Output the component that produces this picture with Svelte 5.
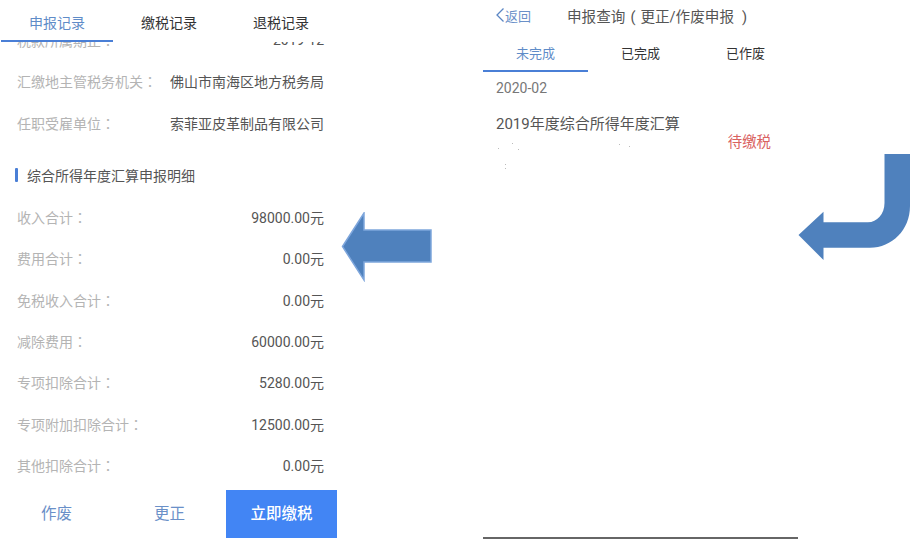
<script>
    const rows = [
        { label: "汇缴地主管税务机关", value: "佛山市南海区地方税务局" },
        { label: "任职受雇单位", value: "索菲亚皮革制品有限公司" },
    ];
    const details = [
        { label: "收入合计", value: "98000.00元" },
        { label: "费用合计", value: "0.00元" },
        { label: "免税收入合计", value: "0.00元" },
        { label: "减除费用", value: "60000.00元" },
        { label: "专项扣除合计", value: "5280.00元" },
        { label: "专项附加扣除合计", value: "12500.00元" },
        { label: "其他扣除合计", value: "0.00元" },
    ];
    const leftTabs = ["申报记录", "缴税记录", "退税记录"];
    const rightTabs = ["未完成", "已完成", "已作废"];
    // stray pixels left over from the redacted line in the source shot
    const specks = [[2, 21], [16, 16], [22, 22], [123, 17], [133, 19], [9, 37], [9, 41]];
</script>

<div class="page">
    <section class="detail">
        <nav class="tabs detail-tabs">
            {#each leftTabs as tab, i}
                <div class="tab" class:active={i === 0}>{tab}</div>
            {/each}
        </nav>

        <div class="scroll">
            <div class="row clipped">
                <span class="label">税款所属期止<span class="colon">：</span></span>
                <span class="value">2019-12</span>
            </div>
            {#each rows as row}
                <div class="row">
                    <span class="label">{row.label}<span class="colon">：</span></span>
                    <span class="value">{row.value}</span>
                </div>
            {/each}

            <h2 class="heading">综合所得年度汇算申报明细</h2>

            {#each details as row}
                <div class="row">
                    <span class="label">{row.label}<span class="colon">：</span></span>
                    <span class="value">{row.value}</span>
                </div>
            {/each}
        </div>

        <footer class="actions">
            <button class="link">作废</button>
            <button class="link">更正</button>
            <button class="primary">立即缴税</button>
        </footer>
    </section>

    <div class="gutter">
        <svg class="arrow-left" width="94" height="70" viewBox="0 0 94 70">
            <path
                d="M1.5 34.5 L23 1 V18 H90 V50 H23 V68 Z"
                fill="#4f81bd"
                stroke="#7ea6dc"
                stroke-width="1.5"
            />
        </svg>
    </div>

    <section class="list">
        <header class="topbar">
            <span class="back">
                <svg width="10" height="16" viewBox="0 0 10 16">
                    <path d="M8.5 1.5 L2 8 L8.5 14.5" fill="none" stroke="#5b86c4" stroke-width="1.3" />
                </svg>
                返回
            </span>
            <span class="title">申报查询<span class="open">(</span>更正/作废申报<span class="close">)</span></span>
        </header>

        <nav class="tabs list-tabs">
            {#each rightTabs as tab, i}
                <div class="tab" class:active={i === 0}>{tab}</div>
            {/each}
        </nav>

        <div class="date">2020-02</div>

        <div class="item">
            <div class="item-title">2019年度综合所得年度汇算</div>
            <div class="status">待缴税</div>
            <svg class="specks" width="140" height="44" viewBox="0 0 140 44">
                {#each specks as [x, y]}
                    <rect {x} {y} width="1" height="1" fill="#bbb" />
                {/each}
            </svg>
        </div>
    </section>

    <div class="side">
        <svg width="114" height="108" viewBox="0 0 114 108">
            <path
                d="M86.5 0 H112 V52 C112 76 94 93.7 72 93.7 H25.5 V106 L0.5 81 L25.5 57.7 V68.3 H70 C79 68.3 86.5 60 86.5 49 Z"
                fill="#4f81bd"
            />
        </svg>
    </div>
</div>

<style>
    :global(body) {
        margin: 0;
        background: #fff;
    }

    .page {
        display: flex;
        width: 914px;
        height: 539px;
        overflow: hidden;
        font-family: Roboto, "Noto Sans CJK SC", sans-serif;
    }

    .detail {
        display: flex;
        flex-direction: column;
        flex: none;
        width: 337px;
        height: 538px;
    }

    .tabs {
        display: flex;
        flex: none;
        background: #fff;
    }

    .tab {
        flex: 1;
        text-align: center;
        color: #333;
        border-bottom: 2px solid transparent;
    }

    .tabs .tab.active {
        color: #5f8cc8;
        border-bottom-color: #4a7fd6;
    }

    .detail-tabs {
        position: relative;
        z-index: 1;
        height: 42px;
        padding-left: 1px;
        background: #fff;
    }

    .detail-tabs .tab {
        font-size: 14px;
        line-height: 46px;
        height: 40px;
    }

    .scroll {
        flex: 1;
        overflow: hidden;
        padding: 0 13px 0 17px;
    }

    .row {
        display: flex;
        justify-content: space-between;
        align-items: center;
        height: 41.3px;
        font-size: 14px;
    }

    .clipped {
        margin-top: -22.5px;
    }

    .label {
        color: #b4b4b4;
    }

    /* centred colon, as in the reference */
    .colon {
        font-family: "Noto Sans CJK TC", sans-serif;
    }

    .value {
        color: #555;
    }

    .heading {
        height: 53px;
        box-sizing: border-box;
        margin: 0 0 0 -2px;
        padding: 23px 0 0 12px;
        position: relative;
        font-size: 14px;
        line-height: 20px;
        font-weight: 400;
        color: #555;
    }

    .heading::before {
        content: "";
        position: absolute;
        left: 0;
        top: 25px;
        width: 3px;
        height: 14px;
        background: #4a7fd6;
        border-radius: 1px;
    }

    .actions {
        display: flex;
        flex: none;
        height: 48px;
    }

    .actions button {
        border: none;
        background: none;
        font: inherit;
        font-size: 15.5px;
        padding: 0 0 4px;
    }

    .link {
        width: 113px;
        color: #6a90c8;
    }

    .actions .primary {
        flex: 1;
        background: #4285f4;
        color: #fff;
        font-weight: 500;
    }

    .gutter {
        flex: none;
        width: 146px;
        padding: 212px 0 0 4px;
        box-sizing: border-box;
    }

    .arrow-left {
        display: block;
    }

    .list {
        display: flex;
        flex-direction: column;
        flex: none;
        width: 315px;
        height: 539px;
        box-sizing: border-box;
        border-bottom: 2px solid #666;
    }

    .topbar {
        display: flex;
        align-items: center;
        height: 30px;
        margin-bottom: 3px;
        padding-left: 13px;
    }

    .back {
        display: flex;
        align-items: center;
        width: 72px;
        margin-left: -1px;
        font-size: 13px;
        color: #6a90c8;
    }

    .title {
        font-size: 14.6px;
        color: #555;
        white-space: nowrap;
    }

    .open {
        margin: 0 5px;
    }

    .close {
        margin-left: 8px;
    }

    .list-tabs {
        height: 39px;
    }

    .list-tabs .tab {
        font-size: 13px;
        line-height: 42px;
        height: 37px;
    }

    .date {
        padding: 8px 0 0 13px;
        font-size: 14px;
        line-height: 17px;
        color: #777;
    }

    .item {
        position: relative;
        padding: 17px 27px 0 13px;
    }

    .item-title {
        font-size: 15px;
        line-height: 20px;
        color: #555;
    }

    .status {
        margin-top: -1px;
        text-align: right;
        font-size: 14.4px;
        line-height: 20px;
        color: #d9625f;
    }

    .specks {
        position: absolute;
        left: 13px;
        top: 30px;
    }

    .side {
        flex: none;
        padding: 154px 0 0 0;
    }

    .side svg {
        display: block;
    }
</style>
